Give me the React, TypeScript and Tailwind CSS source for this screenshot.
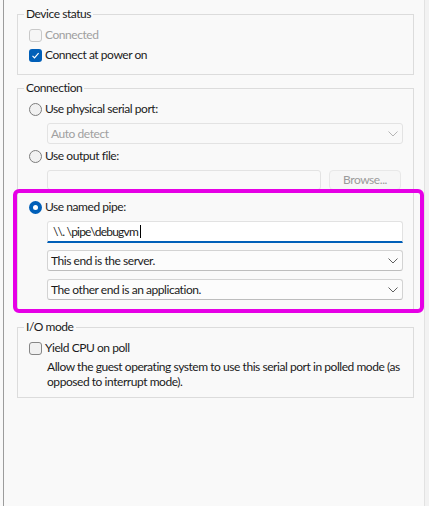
import React from 'react';

const Check = ({ checked = false, disabled = false }: { checked?: boolean; disabled?: boolean }) => {
  if (checked) {
    return (
      <span className="flex h-[13px] w-[13px] shrink-0 items-center justify-center rounded-[3px] bg-[#005fb8]">
        <svg width="9" height="9" viewBox="0 0 9 9" fill="none">
          <path d="M1.5 4.8 L3.5 6.8 L7.6 2.2" stroke="#ffffff" strokeWidth="1.2" />
        </svg>
      </span>
    );
  }
  return (
    <span
      className={
        disabled
          ? 'h-[13px] w-[13px] shrink-0 rounded-[3px] border border-[#c9c9c9] bg-[#f6f6f6]'
          : 'h-[13px] w-[13px] shrink-0 rounded-[3px] border border-[#868686] bg-[#f1f1f1]'
      }
    />
  );
};

const Radio = ({ selected = false }: { selected?: boolean }) => {
  if (selected) {
    return (
      <span className="flex h-[13px] w-[13px] shrink-0 items-center justify-center rounded-full bg-[#005fb8]">
        <span className="h-[5px] w-[5px] rounded-full bg-white" />
      </span>
    );
  }
  return <span className="h-[13px] w-[13px] shrink-0 rounded-full border border-[#7d7d7d] bg-[#f1f1f1]" />;
};

const Chevron = ({ color }: { color: string }) => (
  <svg width="10" height="6" viewBox="0 0 10 6" fill="none" className="mr-[4px] shrink-0">
    <path d="M0.5 0.5 L5 5 L9.5 0.5" stroke={color} strokeWidth="1" />
  </svg>
);

const Select = ({ value, disabled = false, className = '' }: { value: string; disabled?: boolean; className?: string }) => (
  <div
    className={
      'ml-[18px] flex h-[21px] w-[356px] items-center justify-between rounded-[3px] border pl-[3px] ' +
      (disabled
        ? 'border-[#e3e3e3] bg-[#f9f9f9] text-[#a0a0a0] '
        : 'border-[#d3d3d3] border-b-[#bdbdbd] bg-[#fcfcfc] text-[#1b1b1b] ') +
      className
    }
  >
    <span>{value}</span>
    <Chevron color={disabled ? '#b5b5b5' : '#606060'} />
  </div>
);

const Group = ({ title, className = '', children }: { title: string; className?: string; children: React.ReactNode }) => (
  <fieldset className={'border border-[#dcdcdc] p-0 ' + className}>
    <legend className="ml-[6px] px-[2px] leading-[16px]">{title}</legend>
    {children}
  </fieldset>
);

const Row = ({ children, className = '' }: { children: React.ReactNode; className?: string }) => (
  <div className={'flex h-[20px] items-center ' + className}>{children}</div>
);

export default function App() {
  return (
    <div className="flex h-[506px] w-[429px] overflow-hidden bg-[#f9f9f9] font-['Lato',sans-serif] text-[12px] tracking-[-0.45px] text-[#1b1b1b]">
      <div className="w-[4px] shrink-0 border-r border-[#9c9c9c]" />

      <div className="relative flex-1 pl-[13px] pr-[10px]">
        <Group title="Device status" className="mt-[6px] pb-[9px]">
          <div className="pl-[11px] pt-[3px]">
            <Row>
              <Check disabled />
              <span className="ml-[3px] text-[#a0a0a0]">Connected</span>
            </Row>
            <Row>
              <Check checked />
              <span className="ml-[3px]">Connect at power on</span>
            </Row>
          </div>
        </Group>

        <Group title="Connection" className="mt-[5px] pb-[10px]">
          <div className="pl-[11px] pt-[3px]">
            <Row>
              <Radio />
              <span className="ml-[3px]">Use physical serial port:</span>
            </Row>
            <Select value="Auto detect" disabled className="mt-[4px]" />
            <Row className="mt-[2px]">
              <Radio />
              <span className="ml-[3px]">Use output file:</span>
            </Row>
            <div className="ml-[18px] mt-[4px] flex h-[20px] items-stretch">
              <div className="w-[274px] rounded-[3px] border border-[#e3e3e3] bg-[#f9f9f9]" />
              <div className="ml-[8px] flex w-[72px] items-center justify-center rounded-[4px] border border-[#e8e8e8] bg-[#f6f6f6] text-[#9a9a9a]">
                Browse...
              </div>
            </div>
            <Row className="mt-[7px]">
              <Radio selected />
              <span className="ml-[3px]">Use named pipe:</span>
            </Row>
            <div className="ml-[18px] mt-[4px] flex h-[22px] w-[356px] items-center rounded-t-[3px] border border-b-2 border-[#e2e2e2] border-b-[#005fb8] bg-white pl-[5px]">
              <span className="tracking-[-0.8px]">{'\\\\. \\pipe\\debugvm'}</span>
              <span className="ml-[2px] h-[13px] w-[1px] bg-black" />
            </div>
            <Select value="This end is the server." className="mt-[7px]" />
            <Select value="The other end is an application." className="mt-[8px]" />
          </div>
        </Group>

        <Group title="I/O mode" className="mt-[8px] pb-[8px]">
          <div className="pl-[11px] pt-[3px]">
            <Row>
              <Check />
              <span className="ml-[3px]">Yield CPU on poll</span>
            </Row>
            <p className="ml-[18px] mt-[1px] whitespace-nowrap leading-[15px]">
              Allow the guest operating system to use this serial port in polled mode (as
              <br />
              opposed to interrupt mode).
            </p>
          </div>
        </Group>

        <div className="pointer-events-none absolute left-[9px] top-[189px] h-[124px] w-[411px] rounded-[6px] border-[4px] border-[#e600e6]" />
      </div>

      <div className="w-[5px] shrink-0 border-l border-[#e2e2e2] bg-[#f2f2f2]" />
    </div>
  );
}
